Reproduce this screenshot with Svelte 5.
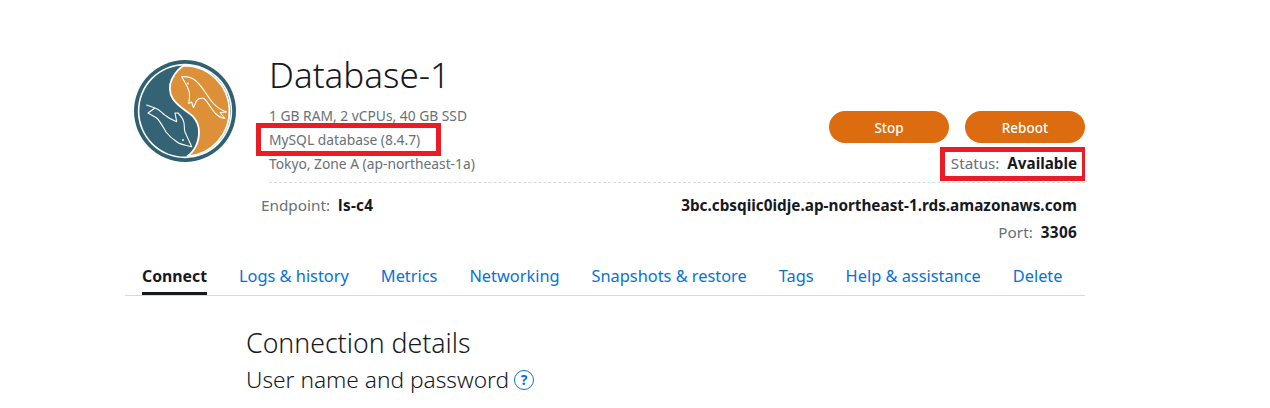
<script lang="ts">
  const tabs = ["Connect", "Logs & history", "Metrics", "Networking", "Snapshots & restore", "Tags", "Help & assistance", "Delete"];
  let active = $state("Connect");
</script>

<div class="page">
  <header class="head">
    <svg class="logo" viewBox="0 0 102 102" aria-hidden="true">
      <circle cx="51" cy="51" r="51" fill="#2f6173" />
      <circle cx="51" cy="51" r="47.2" fill="#fff" />
      <circle cx="51" cy="51" r="45.6" fill="#336374" />
      <path class="orange" d="M50 5.5A45.5 45.5 0 0 1 53 96.4C60 92 65 83 65 72C65 66 63 61 59 56.5C54 51 45 48 39 39C35 33 35 25 38 19C41 13 45 8 50 5.5Z" />
      <g class="lines">
        <path d="M47.7 16.7C52 16.5 58 17.5 62 21C69 27 73 36 79 43C82 46.5 87 50 92.6 52L86 52.5L91 58.5C87 58 84 56 81 53C76 47 74 42 70 38.5C67 38 64 39 62.7 40.5L59.5 47.5L57.5 42L54.5 43.5C55.5 39 56 35 55 31C53.5 26 50 21 47.7 16.7Z" />
        <path d="M12.7 45L21 48C25 49 27 52 30 54.5C33 57 37 59.5 42.7 61.7L41 53L44 53C47 56 49.5 59 50 63C50.5 66 50 69 51 72L57.7 86.7C52 85 47 85 43 82C37 78 35 76 32 72C29 67 26 61 22.7 58L14 53L21 48" />
      </g>
      <circle cx="54" cy="23.5" r="0.9" fill="#fff" />
      <circle cx="49" cy="80" r="0.9" fill="#fff" />
    </svg>

    <div class="info">
      <h1>Database-1</h1>
      <div class="meta-row">
        <div class="meta">
          <p>1 GB RAM, 2 vCPUs, 40 GB SSD</p>
          <p><span class="mark mark-db">MySQL database (8.4.7)</span></p>
          <p>Tokyo, Zone A (ap-northeast-1a)</p>
        </div>
        <div class="actions">
          <div class="buttons">
            <button>Stop</button>
            <button>Reboot</button>
          </div>
          <div class="status"><span class="mark mark-status"><span class="label">Status:</span> <b>Available</b></span></div>
        </div>
      </div>
    </div>
  </header>

  <section class="endpoint">
    <div class="line">
      <span><span class="label">Endpoint:</span> <b class="wide">ls-c4</b></span>
      <b>3bc.cbsqiic0idje.ap-northeast-1.rds.amazonaws.com</b>
    </div>
    <div class="line port"><span><span class="label">Port:</span> <b class="wide">3306</b></span></div>
  </section>

  <nav class="tabs">
    {#each tabs as tab}
      <a href="#{tab}" class:active={tab === active}>{tab}</a>
    {/each}
  </nav>

  <section class="details">
    <h2>Connection details</h2>
    <h3>User name and password <span class="help">?</span></h3>
  </section>
</div>

<style>
  :global(body) {
    margin: 0;
    background: #fff;
    font-family: "Noto Sans", "Open Sans", sans-serif;
    color: #16191f;
  }
  .page {
    width: 960px;
    margin-left: 125px;
    padding-top: 51px;
    height: 357px;
    overflow: hidden;
  }
  .head { display: flex; align-items: flex-start; }
  .logo { width: 102px; height: 102px; margin: 9px 0 0 9px; flex: none; }
  .orange { fill: #dd9038; stroke: #fff; stroke-width: 1.8; }
  .lines { fill: none; stroke: #fff; stroke-width: 1.1; stroke-linejoin: round; stroke-linecap: round; }
  .info { margin-left: 33px; flex: 1; border-bottom: 1px dashed #d5dbdb; padding-bottom: 6px; }
  h1 { margin: 0; font-size: 35px; font-weight: 300; line-height: 48px; }
  .meta-row { display: flex; justify-content: space-between; align-items: flex-end; margin-top: 5px; }
  .meta p { margin: 0; font-size: 13.8px; line-height: 24px; color: #687078; }
  .mark { outline: 5px solid #ec1c24; display: inline-block; line-height: 23px; margin-bottom: -1px; }
  .mark-db { padding-left: 8px; padding-right: 16px; margin-left: -8px; }
  .mark-status { padding-left: 6px; padding-right: 5px; padding-bottom: 1px; }
  .actions { display: flex; flex-direction: column; align-items: flex-end; padding-bottom: 1px; }
  .buttons { display: flex; gap: 16px; }
  button {
    width: 120px; height: 32px; border: 0; border-radius: 16px;
    background: #dd6b10; color: #fff;
    font: 500 13.5px/32px "Noto Sans", sans-serif;
  }
  .status { font-size: 15.2px; line-height: 20px; margin-top: 9px; padding-right: 3px; }
  .label { color: #687078; margin-right: 4px; }
  b { font-weight: 700; }
  .wide { letter-spacing: 0.3px; }
  .endpoint { margin: 11px 8px 0 136px; font-size: 15.3px; }
  .line { display: flex; justify-content: space-between; line-height: 22px; }
  .port { justify-content: flex-end; margin-top: 5px; }
  .tabs { display: flex; gap: 32px; padding: 19px 0 0 17px; border-bottom: 1px solid #d5dbdb; margin-top: 3px; }
  .tabs a { color: #0972d3; text-decoration: none; font-size: 16.35px; line-height: 22px; padding-bottom: 5px; border-bottom: 3px solid transparent; }
  .tabs a.active { color: #16191f; font-size: 15.8px; font-weight: 700; border-bottom-color: #16191f; }
  .details { padding: 29px 0 0 121px; }
  h2 { margin: 0; font-size: 26.7px; font-weight: 300; line-height: 36px; }
  h3 { margin: 4px 0 0; font-size: 22.7px; font-weight: 300; line-height: 30px; display: flex; align-items: center; gap: 5px; }
  .help { width: 18px; height: 18px; border: 1px solid #0972d3; border-radius: 50%; color: #0972d3; font-size: 14px; font-weight: 700; line-height: 18px; text-align: center; }
</style>
